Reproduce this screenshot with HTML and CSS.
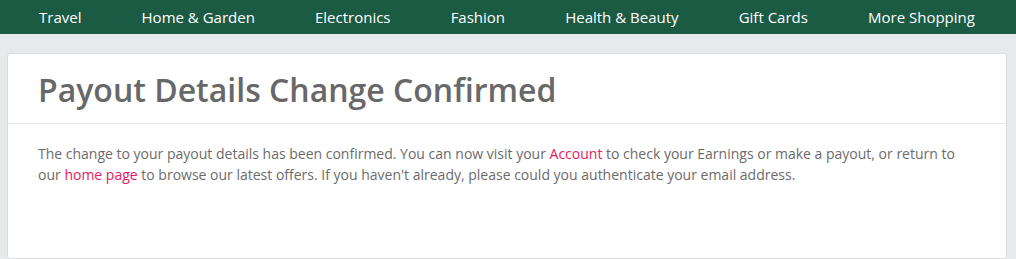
FILE: index.html
```html
<!DOCTYPE html>
<html lang="en">
<head>
<meta charset="utf-8">
<title>Payout Details Change Confirmed</title>
<link rel="stylesheet" href="styles.css">
</head>
<body>
<nav class="topnav">
  <ul class="nav-list">
    <li><a href="#">Travel</a></li>
    <li><a href="#">Home &amp; Garden</a></li>
    <li><a href="#">Electronics</a></li>
    <li><a href="#">Fashion</a></li>
    <li><a href="#">Health &amp; Beauty</a></li>
    <li><a href="#">Gift Cards</a></li>
    <li><a href="#">More Shopping</a></li>
  </ul>
</nav>
<main class="page">
  <section class="card">
    <header class="card-header">
      <h1 class="title">Payout Details Change Confirmed</h1>
    </header>
    <div class="card-body">
      <p class="message">The change to your payout details has been confirmed. You can now visit your <a href="#">Account</a> to check your Earnings or make a payout, or return to our <a href="#">home page</a> to browse our latest offers. If you haven't already, please could you authenticate your email address.</p>
    </div>
  </section>
</main>
</body>
</html>
```

FILE: styles.css
```css
* { box-sizing: border-box; }
html, body {
  margin: 0;
  padding: 0;
}
body {
  background: #e8e9ea;
  font-family: "Open Sans", "Liberation Sans", sans-serif;
  color: #6b6b6b;
}
.topnav {
  background: #1b5b44;
  height: 34px;
}
.nav-list {
  list-style: none;
  margin: 0;
  padding: 0 41px 0 39px;
  display: flex;
  justify-content: space-between;
  height: 34px;
  align-items: center;
}
.nav-list li a {
  display: block;
  color: #ffffff;
  text-decoration: none;
  font-size: 15px;
  line-height: 32px;
  white-space: nowrap;
}
.page {
  padding: 19px 9px 0 7px;
}
.card {
  background: #ffffff;
  border: 1px solid #dcdcdc;
  border-radius: 3px;
  min-height: 206px;
}
.card-header {
  border-bottom: 1px solid #e6e6e6;
  padding: 17px 30px 14px;
}
.title {
  margin: 0;
  font-size: 32px;
  font-weight: 600;
  line-height: 38px;
  color: #686868;
}
.card-body {
  padding: 19px 30px;
}
.message {
  margin: 0;
  font-size: 14px;
  line-height: 21px;
  color: #6b6b6b;
}
.message a {
  color: #e8195f;
  text-decoration: none;
}
```
